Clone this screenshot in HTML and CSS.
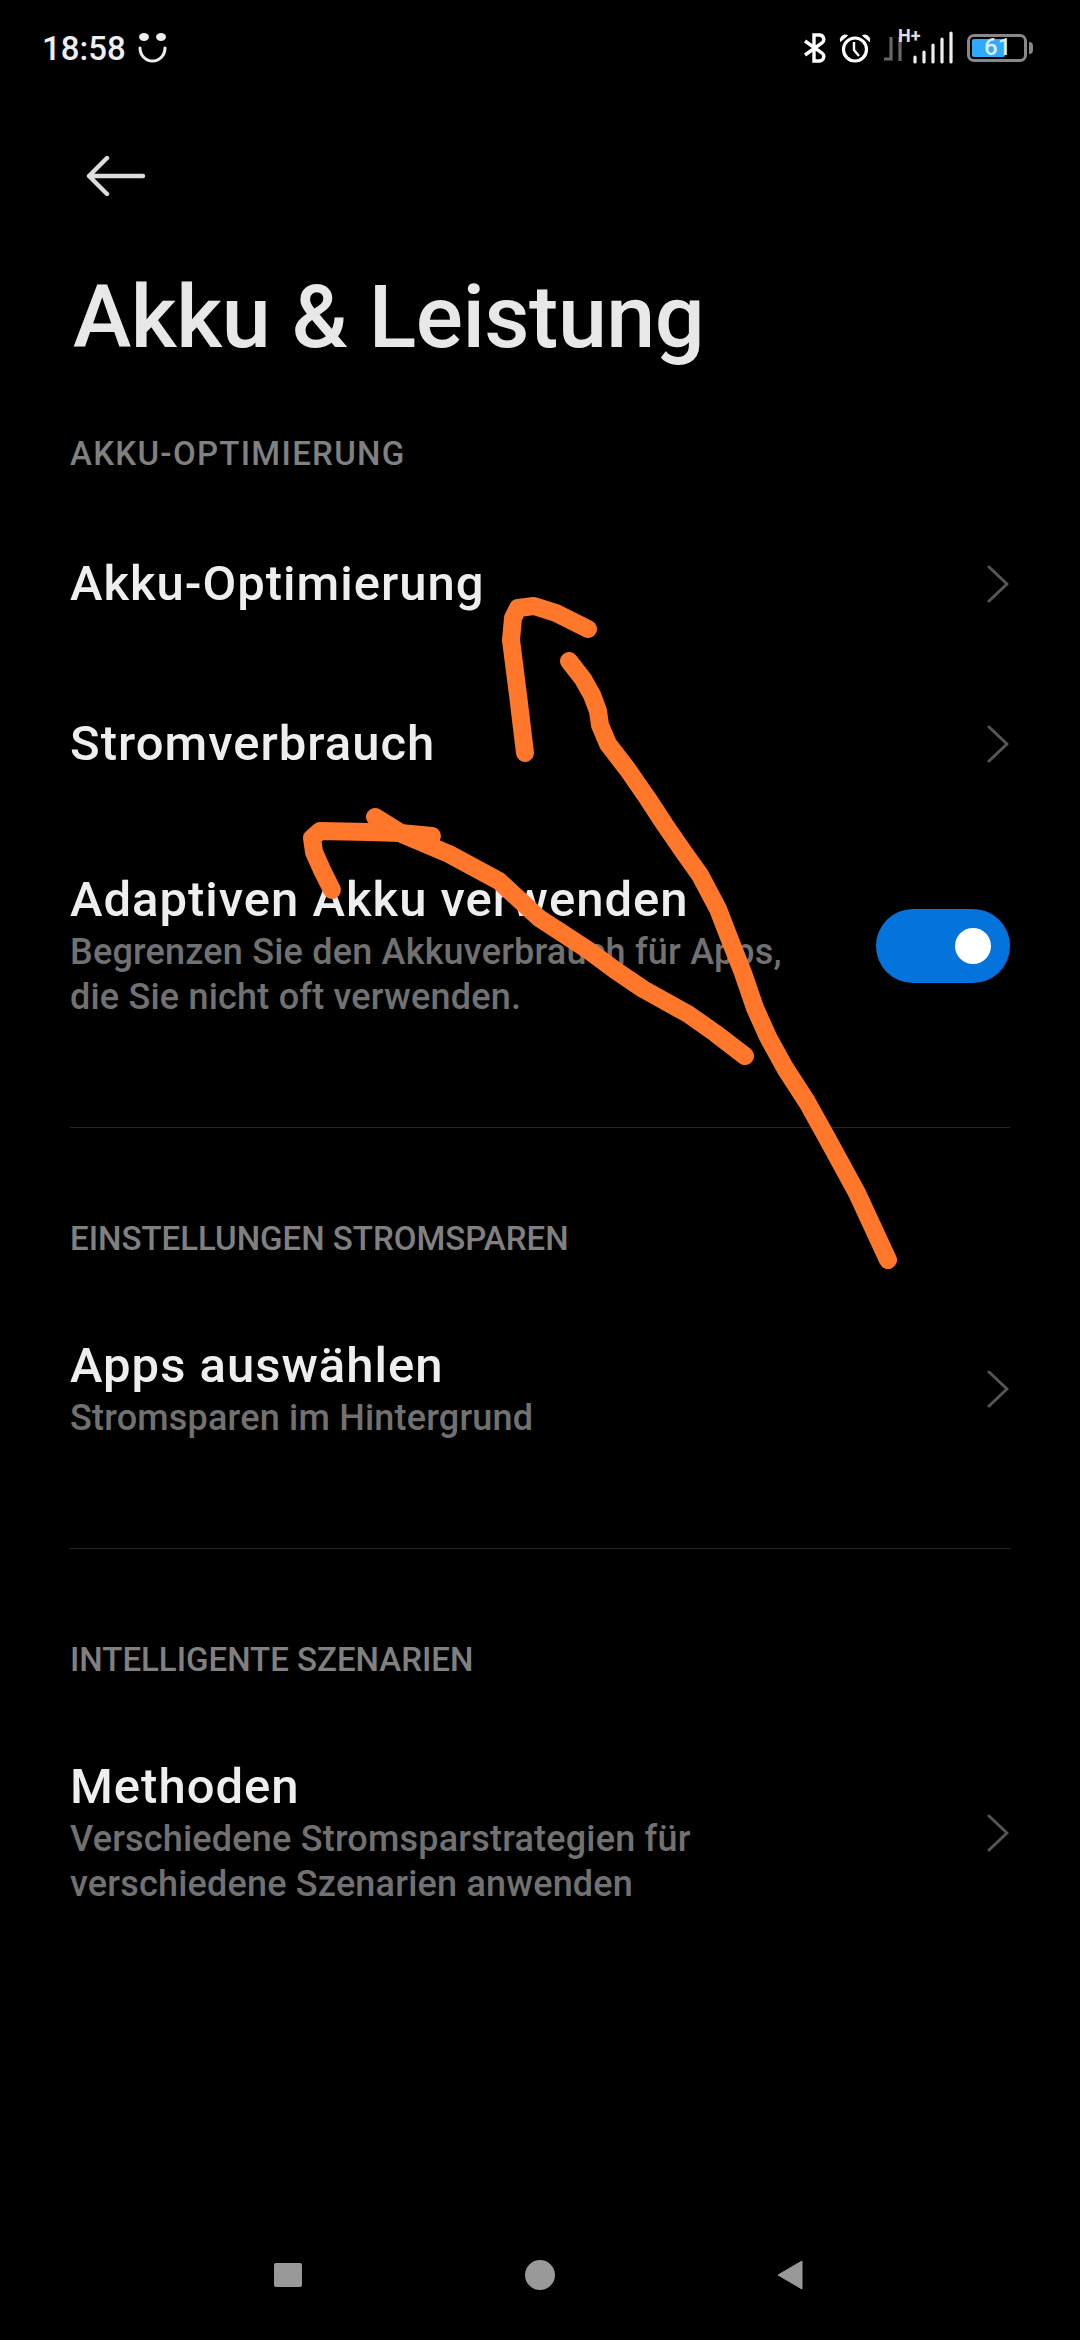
FILE: index.html
```html
<!DOCTYPE html>
<html lang="de">
<head>
  <meta charset="UTF-8">
  <meta name="viewport" content="width=device-width, initial-scale=1.0">
  <title>Akku &amp; Leistung</title>
  <link rel="stylesheet" href="styles.css">
</head>
<body>
  <div class="phone">
    <div class="statusbar">
      <div class="status_left">
        <span class="zeit">18:58</span>
        <svg class="smile" width="30" height="30" viewBox="0 0 30 30">
          <ellipse cx="6" cy="4" rx="5" ry="4" fill="#eee"/>
          <ellipse cx="23" cy="4" rx="5" ry="4" fill="#eee"/>
          <path d="M2 15a12.500 13 0 0 0 25 0" fill="none" stroke="#eee" stroke-width="3" stroke-linecap="round"/>
        </svg>
      </div>
      <div class="status_right">
        <svg width="22" height="30" viewBox="0 0 22 30" fill="none" stroke="#fff" stroke-width="3.400">
          <path d="M1 8l17 12a4.500 4.500 0 0 1-2 8H10V2h6a4.500 4.500 0 0 1 2 8L1 22"/>
        </svg>
        <svg width="32" height="30" viewBox="0 0 32 30" fill="none" stroke="#fff">
          <circle cx="16" cy="16.500" r="11.500" stroke-width="3.200"/>
          <path d="M15 9v8l5 6" stroke-width="2.400"/>
          <path d="M1.500 8.500a5 5 0 0 1 7-6zM30.500 8.500a5 5 0 0 0-7-6z" fill="#fff" stroke-width="1"/>
        </svg>
        <div class="signal">
          <svg width="70" height="40" viewBox="0 0 70 40" fill="none" stroke-width="3.200">
            <path d="M0 31H7V9M16 9V33" stroke="#666"/>
            <path d="M31 29V34M40 24V34M49 17V34M58 11V34M67 5V34" stroke="#eee" stroke-linecap="round"/>
          </svg>
          <span class="hplus">H+</span>
        </div>
        <div class="akku">
          <div class="akku_rand">
            <div class="akku_stand"></div>
            <span class="akku_zahl">61</span>
          </div>
          <div class="akku_pol"></div>
        </div>
      </div>
    </div>

    <div class="zurueck">
      <svg width="60" height="42" viewBox="0 0 60 42" fill="none" stroke="#ddd" stroke-width="4.400" stroke-linecap="round" stroke-linejoin="round">
        <path d="M57 21H3M21 3L3 21l18 18"/>
      </svg>
    </div>

    <h1 class="titel">Akku &amp; Leistung</h1>

    <p class="sektion sektion_erste">AKKU-OPTIMIERUNG</p>
    <div class="zeile zeile_kurz">
      <div class="zeile_text"><p class="name">Akku-Optimierung</p></div>
      <svg class="pfeil" width="24" height="38" viewBox="0 0 24 38"><path d="M3 2l18 17L3 36"/></svg>
    </div>
    <div class="zeile zeile_kurz">
      <div class="zeile_text"><p class="name">Stromverbrauch</p></div>
      <svg class="pfeil" width="24" height="38" viewBox="0 0 24 38"><path d="M3 2l18 17L3 36"/></svg>
    </div>
    <div class="zeile zeile_adaptiv">
      <div class="zeile_text">
        <p class="name">Adaptiven Akku verwenden</p>
        <p class="info">Begrenzen Sie den Akkuverbrauch für Apps,<br>die Sie nicht oft verwenden.</p>
      </div>
      <div class="schalter"><div class="schalter_punkt"></div></div>
    </div>

    <div class="linie"></div>

    <p class="sektion">EINSTELLUNGEN STROMSPAREN</p>
    <div class="zeile zeile_apps">
      <div class="zeile_text">
        <p class="name">Apps auswählen</p>
        <p class="info">Stromsparen im Hintergrund</p>
      </div>
      <svg class="pfeil" width="24" height="38" viewBox="0 0 24 38"><path d="M3 2l18 17L3 36"/></svg>
    </div>

    <div class="linie"></div>

    <p class="sektion">INTELLIGENTE SZENARIEN</p>
    <div class="zeile zeile_methoden">
      <div class="zeile_text">
        <p class="name">Methoden</p>
        <p class="info">Verschiedene Stromsparstrategien für<br>verschiedene Szenarien anwenden</p>
      </div>
      <svg class="pfeil" width="24" height="38" viewBox="0 0 24 38"><path d="M3 2l18 17L3 36"/></svg>
    </div>

    <div class="navbar">
      <div class="nav_quadrat"></div>
      <div class="nav_kreis"></div>
      <svg width="26" height="30" viewBox="0 0 26 30"><path d="M25 1v28L1 15z" fill="#999" stroke="#999" stroke-width="1" stroke-linejoin="round"/></svg>
    </div>

    <!-- hand drawn marks on top of the screenshot -->
    <svg class="kritzel" width="1080" height="2340" viewBox="0 0 1080 2340" fill="none" stroke="#ff772a" stroke-width="18" stroke-linecap="round" stroke-linejoin="round">
      <path d="M525 753L518 695L511 640L513 618L518 608L534 606L556 613L588 629"/>
      <path d="M888 1260L857 1193L827 1138L807 1102L785 1068L768 1037L755 1008L743 973L730 940L718 909L700 875L685 854L665 825L648 799L628 770L608 744L600 725L598 711L592 695L583 679L569 661"/>
      <path d="M745 1056L715 1033L688 1014L643 989L615 970L588 950L539 918L499 881L449 854L404 835L375 817"/>
      <path d="M432 836L400 833L369 832L320 831L312 838L314 852L322 870L332 890"/>
    </svg>
  </div>
</body>
</html>
```

FILE: styles.css
```css
html, body {
  margin: 0;
  padding: 0;
  background-color: black;
}
p, h1 {
  margin: 0;
}
.phone {
  position: relative;
  width: 1080px;
  height: 2340px;
  overflow: hidden;
  display: flex;
  flex-direction: column;
  font-family: "Roboto", "Noto Sans", sans-serif;
  color: #eee;
}
.statusbar {
  height: 96px;
  padding: 0 47px 0 42px;
  display: flex;
  justify-content: space-between;
  align-items: center;
  box-sizing: border-box;
}
.status_left {
  display: flex;
  align-items: center;
  gap: 12px;
}
.zeit {
  font-size: 33px;
  font-weight: 500;
}
.status_right {
  display: flex;
  align-items: center;
  gap: 13px;
}
.signal {
  position: relative;
  width: 70px;
  height: 40px;
}
.hplus {
  position: absolute;
  left: 14px;
  top: -3px;
  font-size: 18px;
  font-weight: 700;
  color: #ddd;
}
.akku {
  display: flex;
  align-items: center;
  gap: 2px;
}
.akku_rand {
  position: relative;
  width: 60px;
  height: 28px;
  box-sizing: border-box;
  border: 3px solid #888;
  border-radius: 7px;
  padding: 2px;
}
.akku_stand {
  width: 33px;
  height: 100%;
  background-color: #2fa8ff;
  border-radius: 2px;
}
.akku_zahl {
  position: absolute;
  left: 14px;
  top: -4px;
  font-size: 24px;
  font-weight: 500;
  color: #d8efff;
}
.akku_pol {
  width: 4px;
  height: 12px;
  background-color: #888;
  border-radius: 0 4px 4px 0;
}
.zurueck {
  padding: 59px 0 0 86px;
  height: 42px;
}
.titel {
  margin: 70px 0 0 73px;
  font-size: 88px;
  line-height: 99px;
  letter-spacing: -0.5px;
  font-weight: 500;
  color: #e8e8e8;
}
.sektion {
  margin-left: 70px;
  font-size: 33px;
  line-height: 40px;
  font-weight: 500;
  color: #808080;
}
.sektion_erste {
  margin-top: 68px;
  letter-spacing: 1.3px;
}
.zeile {
  margin: 0 70px;
  display: flex;
  justify-content: space-between;
  align-items: center;
}
.zeile_text {
  flex: 1;
}
.name {
  font-size: 49px;
  line-height: 58px;
  letter-spacing: 1px;
  font-weight: 500;
  color: #eee;
}
.info {
  margin-top: 1px;
  font-size: 36px;
  line-height: 45px;
  letter-spacing: 0.2px;
  font-weight: 500;
  color: #717171;
}
.pfeil {
  fill: none;
  stroke: #555;
  stroke-width: 3;
  stroke-linecap: round;
  stroke-linejoin: round;
}
.zeile_kurz {
  height: 160px;
}
.sektion_erste + .zeile_kurz {
  margin-top: 30px;
}
.zeile_adaptiv {
  margin-top: 47px;
}
.schalter {
  width: 134px;
  height: 74px;
  border-radius: 37px;
  background-color: #0573dc;
  display: flex;
  justify-content: flex-end;
  align-items: center;
  padding-right: 19px;
  box-sizing: border-box;
}
.schalter_punkt {
  width: 36px;
  height: 36px;
  border-radius: 50%;
  background-color: white;
}
.linie {
  height: 1px;
  margin: 107px 70px 91px;
  background-color: #262626;
}
.zeile_apps {
  margin-top: 78px;
}
.zeile_methoden {
  margin-top: 78px;
}
.navbar {
  margin-top: auto;
  height: 130px;
  padding: 0 277px 0 274px;
  display: flex;
  justify-content: space-between;
  align-items: center;
  box-sizing: border-box;
}
.nav_quadrat {
  width: 28px;
  height: 24px;
  background-color: #999;
  border-radius: 2px;
}
.nav_kreis {
  width: 30px;
  height: 30px;
  background-color: #999;
  border-radius: 50%;
}
.kritzel {
  position: absolute;
  left: 0;
  top: 0;
}
```
